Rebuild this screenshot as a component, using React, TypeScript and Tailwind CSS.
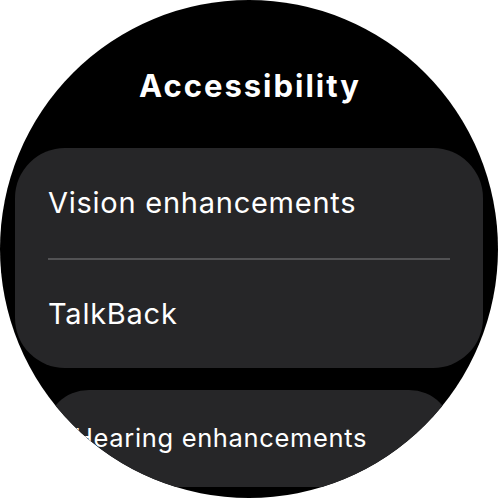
const rows = ["Vision enhancements", "TalkBack"];

export default function App() {
  return (
    <div className="h-[498px] w-[498px] bg-white font-['Inter',sans-serif] text-white">
      <div className="flex h-full w-full flex-col overflow-hidden rounded-full bg-black">
        <h1 className="mt-[66px] h-[40px] pl-[2px] text-center text-[31px] font-bold leading-[40px] tracking-[2px]">
          Accessibility
        </h1>

        <section className="mx-[15px] mt-[42px] w-[468px] shrink-0 rounded-[50px] bg-[#262628]">
          {rows.map((label, i) => (
            <div key={label}>
              {i > 0 ? <div className="mx-[33px] h-[2px] bg-[#525254]" /> : null}
              <div
                className={`flex items-center px-[33px] text-[29px] tracking-[0.75px] ${
                  i === 0 ? "h-[110px]" : "h-[108px]"
                }`}
              >
                {label}
              </div>
            </div>
          ))}
        </section>

        <section className="ml-[45px] mt-[22px] w-[408px] shrink-0 rounded-[44px] bg-[#262628]">
          <div className="flex h-[97px] items-center px-[29px] text-[25.5px] tracking-[0.65px]">
            Hearing enhancements
          </div>
        </section>
      </div>
    </div>
  );
}
